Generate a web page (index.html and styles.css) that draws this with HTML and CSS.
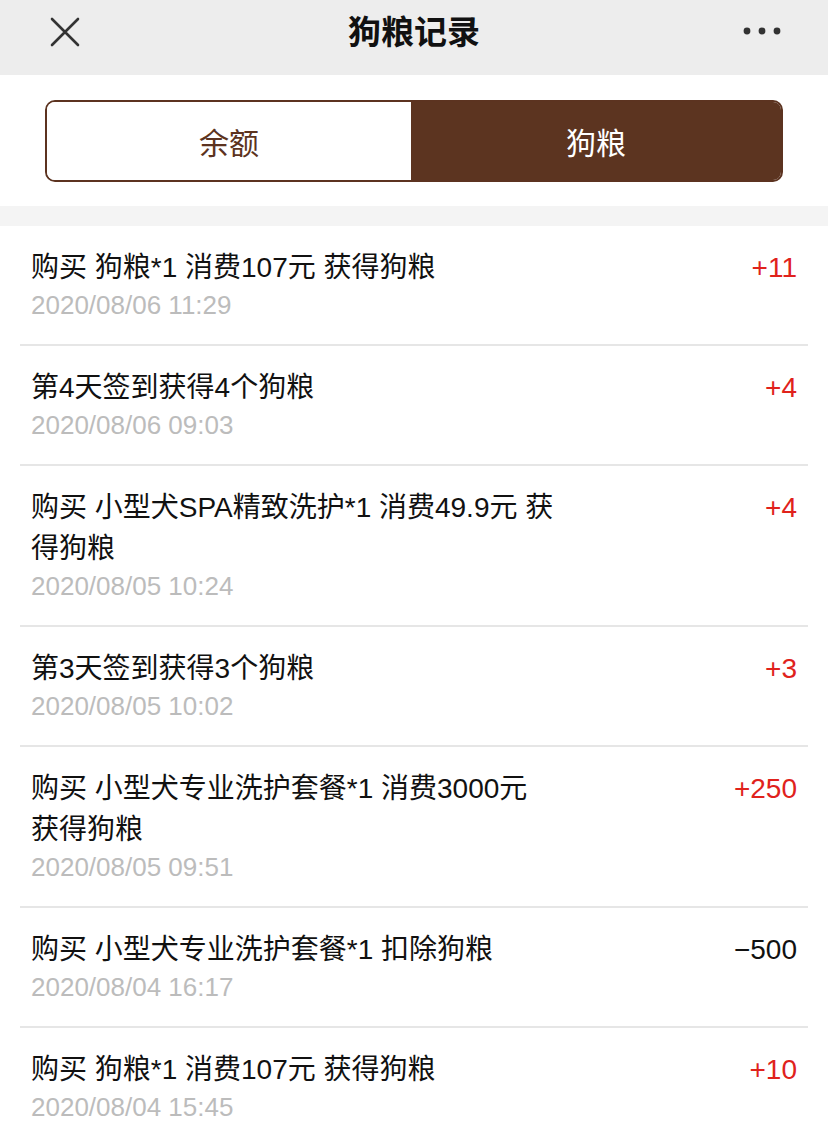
FILE: index.html
```html
<!DOCTYPE html>
<html lang="zh-CN">
<head>
<meta charset="utf-8">
<title>狗粮记录</title>
<link rel="stylesheet" href="styles.css">
</head>
<body>
<header class="nav">
  <span class="nav-close">
    <svg width="32" height="32" viewBox="0 0 32 32"><path d="M3 3 L29 29 M29 3 L3 29" stroke="#333" stroke-width="2.6" stroke-linecap="round" fill="none"/></svg>
  </span>
  <h1 class="nav-title">狗粮记录</h1>
  <span class="nav-more">
    <svg width="40" height="10" viewBox="0 0 40 10"><circle cx="5" cy="5" r="3.4" fill="#333"/><circle cx="20" cy="5" r="3.4" fill="#333"/><circle cx="35" cy="5" r="3.4" fill="#333"/></svg>
  </span>
</header>
<section class="tabs-wrap">
  <div class="tabs">
    <div class="tab first">余额</div>
    <div class="tab active">狗粮</div>
  </div>
</section>
<div class="gap"></div>
<ul class="list">
  <li class="row"><div class="info"><div class="title">购买 狗粮*1 消费107元 获得狗粮</div><div class="date">2020/08/06 11:29</div></div><div class="amt plus">+11</div></li>
  <li class="row"><div class="info"><div class="title">第4天签到获得4个狗粮</div><div class="date">2020/08/06 09:03</div></div><div class="amt plus">+4</div></li>
  <li class="row"><div class="info"><div class="title">购买 小型犬SPA精致洗护*1 消费49.9元 获得狗粮</div><div class="date">2020/08/05 10:24</div></div><div class="amt plus">+4</div></li>
  <li class="row"><div class="info"><div class="title">第3天签到获得3个狗粮</div><div class="date">2020/08/05 10:02</div></div><div class="amt plus">+3</div></li>
  <li class="row"><div class="info"><div class="title">购买 小型犬专业洗护套餐*1 消费3000元 获得狗粮</div><div class="date">2020/08/05 09:51</div></div><div class="amt plus">+250</div></li>
  <li class="row"><div class="info"><div class="title">购买 小型犬专业洗护套餐*1 扣除狗粮</div><div class="date">2020/08/04 16:17</div></div><div class="amt minus">−500</div></li>
  <li class="row"><div class="info"><div class="title">购买 狗粮*1 消费107元 获得狗粮</div><div class="date">2020/08/04 15:45</div></div><div class="amt plus">+10</div></li>
</ul>
</body>
</html>
```

FILE: styles.css
```css
* { box-sizing: border-box; }
html, body { margin: 0; padding: 0; }
body {
  width: 828px;
  background: #fff;
  font-family: "Liberation Sans", "Noto Sans CJK SC", sans-serif;
  color: #111;
  overflow: hidden;
}
.nav {
  height: 75px;
  background: #ededed;
  display: flex;
  align-items: center;
  justify-content: space-between;
  padding: 0 46px 0 49px;
  position: relative;
}
.nav-close { display: flex; width: 32px; height: 32px; margin-top: -12px; }
.nav-more { display: flex; margin-top: -14px; }
.nav-title {
  position: absolute;
  left: 0; right: 0; top: 12px;
  margin: 0;
  text-align: center;
  font-size: 33px;
  line-height: 42px;
  font-weight: 600;
  color: #111;
  pointer-events: none;
}
.tabs-wrap {
  padding: 25px 45px 24px;
  background: #fff;
}
.tabs {
  display: flex;
  height: 82px;
  border: 2px solid #5c3320;
  border-radius: 10px;
  overflow: hidden;
}
.tab {
  flex: 1;
  display: flex;
  align-items: center;
  justify-content: center;
  font-size: 30px;
  color: #5c3320;
  background: #fff;
}
.tab.first { flex: 0 0 364px; }
.tab.active { background: #5c3420; color: #fff; }
.gap { height: 20px; background: #f4f4f4; }
.list { list-style: none; margin: 0 20px; padding: 0; }
.row {
  display: flex;
  justify-content: space-between;
  align-items: flex-start;
  padding: 21px 11px 22px;
  border-bottom: 2px solid #e6e6e6;
}
.row:last-child { border-bottom: none; }
.info { max-width: 527px; }
.title { font-size: 28px; line-height: 41px; color: #111; }
.date { font-size: 26px; line-height: 34px; color: #bcbcbc; }
.amt { font-size: 28px; line-height: 41px; white-space: nowrap; }
.amt.plus { color: #e0221c; }
.amt.minus { color: #111; }
```
